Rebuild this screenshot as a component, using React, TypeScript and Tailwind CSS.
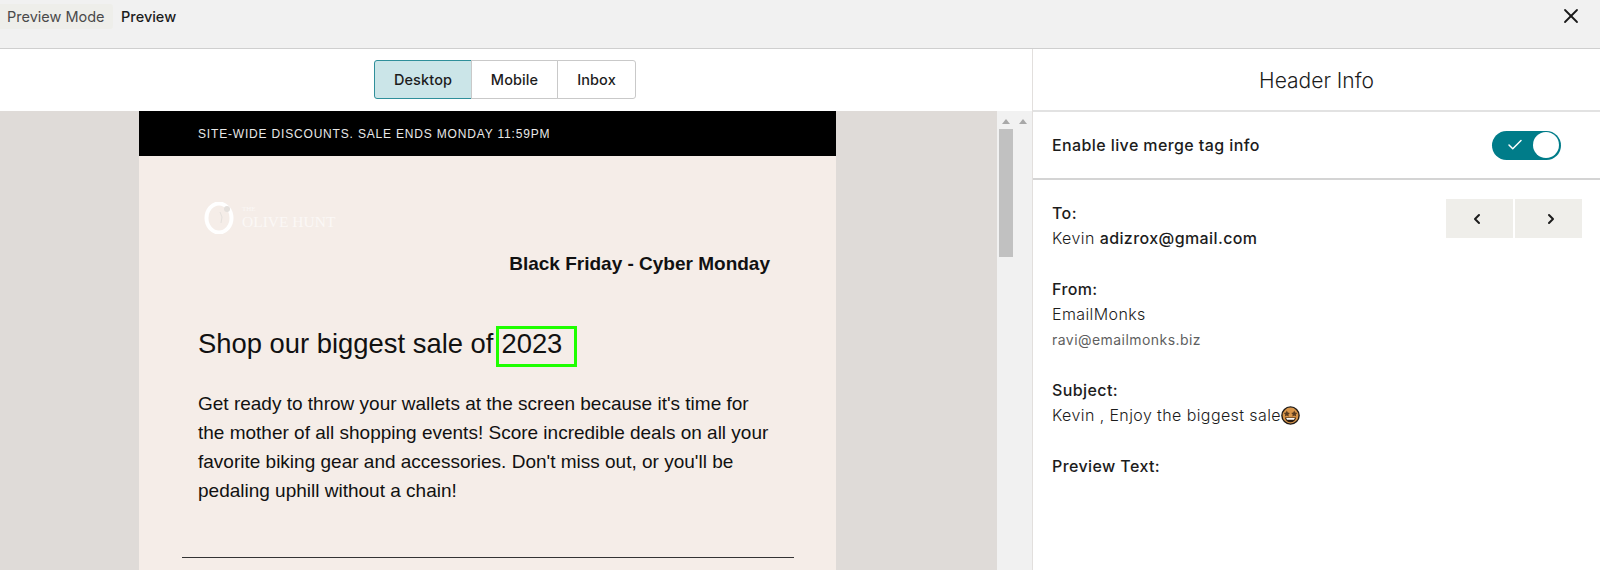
import { Check, ChevronLeft, ChevronRight, X } from 'lucide-react'

const ui = "font-['Inter',sans-serif]"
const mail = "font-['Liberation_Sans',Arial,sans-serif]"

function ScrollArrow() {
  return <div className="w-0 h-0 border-x-[4px] border-x-transparent border-b-[5px] border-b-[#a8a8a8]" />
}

function StarStruck() {
  return (
    <svg width="19" height="19" viewBox="0 0 19 19" className="shrink-0">
      <circle cx="9.5" cy="9.5" r="8.6" fill="#d9964a" stroke="#1f1a16" strokeWidth="1.4" />
      <path d="M5.8 4.6l1 2 2.1.3-1.5 1.5.4 2.1-2-1-1.9 1 .4-2.1-1.5-1.5 2.1-.3z" fill="#5a3d22" />
      <path d="M13.2 4.6l1 2 2.1.3-1.5 1.5.4 2.1-2-1-1.9 1 .4-2.1-1.5-1.5 2.1-.3z" fill="#5a3d22" />
      <path d="M4 11.4h11c-.4 3-2.6 4.8-5.5 4.8S4.4 14.4 4 11.4z" fill="#2a1c12" />
      <path d="M5.2 12.1h8.600c-.2.8-.5 1.300-.9 1.700H6.100c-.4-.4-.7-.9-.9-1.700z" fill="#fff" />
    </svg>
  )
}

function OliveLogo() {
  return (
    <div className="flex items-center gap-[8px] text-[#fbf8f6] ml-[6px]">
      <svg width="30" height="32" viewBox="0 0 30 32">
        <ellipse cx="15" cy="16" rx="12.5" ry="14.500" fill="none" stroke="#ffffff" strokeWidth="4" />
        <circle cx="23" cy="7" r="3" fill="#e4e0dc" />
        <path d="M16 10l2 5-1 6" fill="none" stroke="#e4e0dc" strokeWidth="1" />
      </svg>
      <div className="font-['Liberation_Serif',serif] leading-none">
        <div className="text-[7px] mb-[1px]">THE</div>
        <div className="text-[15.500px]">OLIVE HUNT</div>
      </div>
    </div>
  )
}

function EmailPreview() {
  return (
    <div className={`${mail} w-[697px] ml-[139px] text-[#111]`}>
      <div className="h-[45px] bg-black pl-[59px] flex items-center text-[12px] tracking-[0.82px] text-[#e8e8e8]">
        SITE-WIDE DISCOUNTS. SALE ENDS MONDAY 11:59PM
      </div>
      <div className="bg-[#f5ede8] h-[459px] pt-[46px] px-[59px]">
        <OliveLogo />
        <p className="text-right text-[19px] font-bold mt-[18px] mr-[7px] leading-[24px]">
          Black Friday - Cyber Monday
        </p>
        <h1 className="text-[27.400px] leading-[41px] mt-[47px] flex items-start">
          Shop our biggest sale of
          <span className="ml-[3px] mt-[3px] w-[81px] h-[41px] border-[3px] border-[#1fff00] pl-[2px] leading-[29px]">
            2023
          </span>
        </h1>
        <p className="text-[19px] leading-[29px] mt-[22px] w-[578px]">
          Get ready to throw your wallets at the screen because it's time for the mother of all shopping events! Score
          incredible deals on all your favorite biking gear and accessories. Don't miss out, or you'll be pedaling
          uphill without a chain!
        </p>
        <div className="h-px bg-[#333] mt-[52px] -ml-[16px] w-[612px]" />
      </div>
    </div>
  )
}

export default function App() {
  const tabs = [
    { label: 'Desktop', width: 'w-[98px]', active: true },
    { label: 'Mobile', width: 'w-[87px]', active: false },
    { label: 'Inbox', width: 'w-[79px]', active: false },
  ]

  return (
    <div className={`${ui} h-[570px] w-[1600px] overflow-hidden bg-white text-[#1c1c1c] flex flex-col`}>
      {/* Top bar */}
      <div className="h-[49px] shrink-0 bg-[#f1f1f1] border-b border-[#cfcfcf] flex items-start">
        <div className="mt-[4px] h-[25px] w-[113px] bg-[#eeeeea] rounded-r-[3px] pl-[7px] flex items-center text-[14.500px] text-[#4a4a4a]">
          Preview Mode
        </div>
        <div className="mt-[4px] h-[25px] ml-[8px] flex items-center text-[14.500px] font-medium">Preview</div>
        <X size={24} strokeWidth={1.8} className="ml-auto mr-[17px] mt-[4px] text-[#1a1a1a]" />
      </div>

      <div className="flex flex-1 min-h-0">
        {/* Left side */}
        <div className="w-[1033px] shrink-0 flex flex-col border-r border-[#e2dfdd]">
          <div className="h-[62px] shrink-0 flex justify-center items-start pt-[11px] pr-[22px]">
            {tabs.map((tab) => (
              <div
                key={tab.label}
                className={`${tab.width} h-[39px] flex items-center justify-center text-[14.500px] tracking-[0.1px] font-medium border ${
                  tab.active
                    ? 'bg-[#cbe5e8] border-[#2f8f9a] rounded-l-[3px]'
                    : 'bg-white border-[#c9c9c9] -ml-px last:rounded-r-[3px]'
                }`}
              >
                {tab.label}
              </div>
            ))}
          </div>
          <div className="flex-1 min-h-0 bg-[#dfdbd8] flex">
            <div className="w-[997px] shrink-0">
              <EmailPreview />
            </div>
            <div className="flex-1 bg-[#f1f1f1] flex">
              <div className="w-[18px] pl-[2px] pt-[8px] flex flex-col">
                <div className="pl-[3px]">
                  <ScrollArrow />
                </div>
                <div className="mt-[5px] w-[14px] h-[128px] bg-[#c1c1c1]" />
              </div>
              <div className="pl-[4px] pt-[8px]">
                <ScrollArrow />
              </div>
            </div>
          </div>
        </div>

        {/* Right side */}
        <div className="flex-1 min-w-0">
          <div className="h-[63px] pt-[2px] border-b-2 border-[#e2e2e2] flex items-center justify-center text-[21px] font-light">
            Header Info
          </div>
          <div className="h-[68px] border-b-2 border-[#d4d4d4] flex items-center pl-[19px] pr-[39px] justify-between">
            <span className="text-[16px] tracking-[0.4px] font-medium">Enable live merge tag info</span>
            <div className="w-[69px] h-[29px] rounded-full bg-[#007c89] flex items-center justify-between pl-[14px] pr-[2px]">
              <Check size={18} strokeWidth={2} className="text-white" />
              <div className="w-[26px] h-[26px] rounded-full bg-white" />
            </div>
          </div>
          <div className="relative pl-[19px] pt-[21px] text-[16px] tracking-[0.4px] leading-[25px]">
            <div className="absolute top-[19px] right-[18px] flex gap-[2px]">
              <div className="w-[67px] h-[39px] bg-[#efeeea] flex items-center justify-center pr-[5px]">
                <ChevronLeft size={16} strokeWidth={3} />
              </div>
              <div className="w-[67px] h-[39px] bg-[#efeeea] flex items-center justify-center pl-[5px]">
                <ChevronRight size={16} strokeWidth={3} />
              </div>
            </div>
            <div className="font-medium">To:</div>
            <div>
              <span className="font-light">Kevin</span> <span className="font-medium">adizrox@gmail.com</span>
            </div>
            <div className="font-medium mt-[26px]">From:</div>
            <div className="font-light">EmailMonks</div>
            <div className="text-[14px] tracking-[0.45px] text-[#5f5f5f]">ravi@emailmonks.biz</div>
            <div className="font-medium mt-[26px]">Subject:</div>
            <div className="font-light flex items-center">
              Kevin , Enjoy the biggest sale
              <StarStruck />
            </div>
            <div className="font-medium mt-[26px]">Preview Text:</div>
          </div>
        </div>
      </div>
    </div>
  )
}
